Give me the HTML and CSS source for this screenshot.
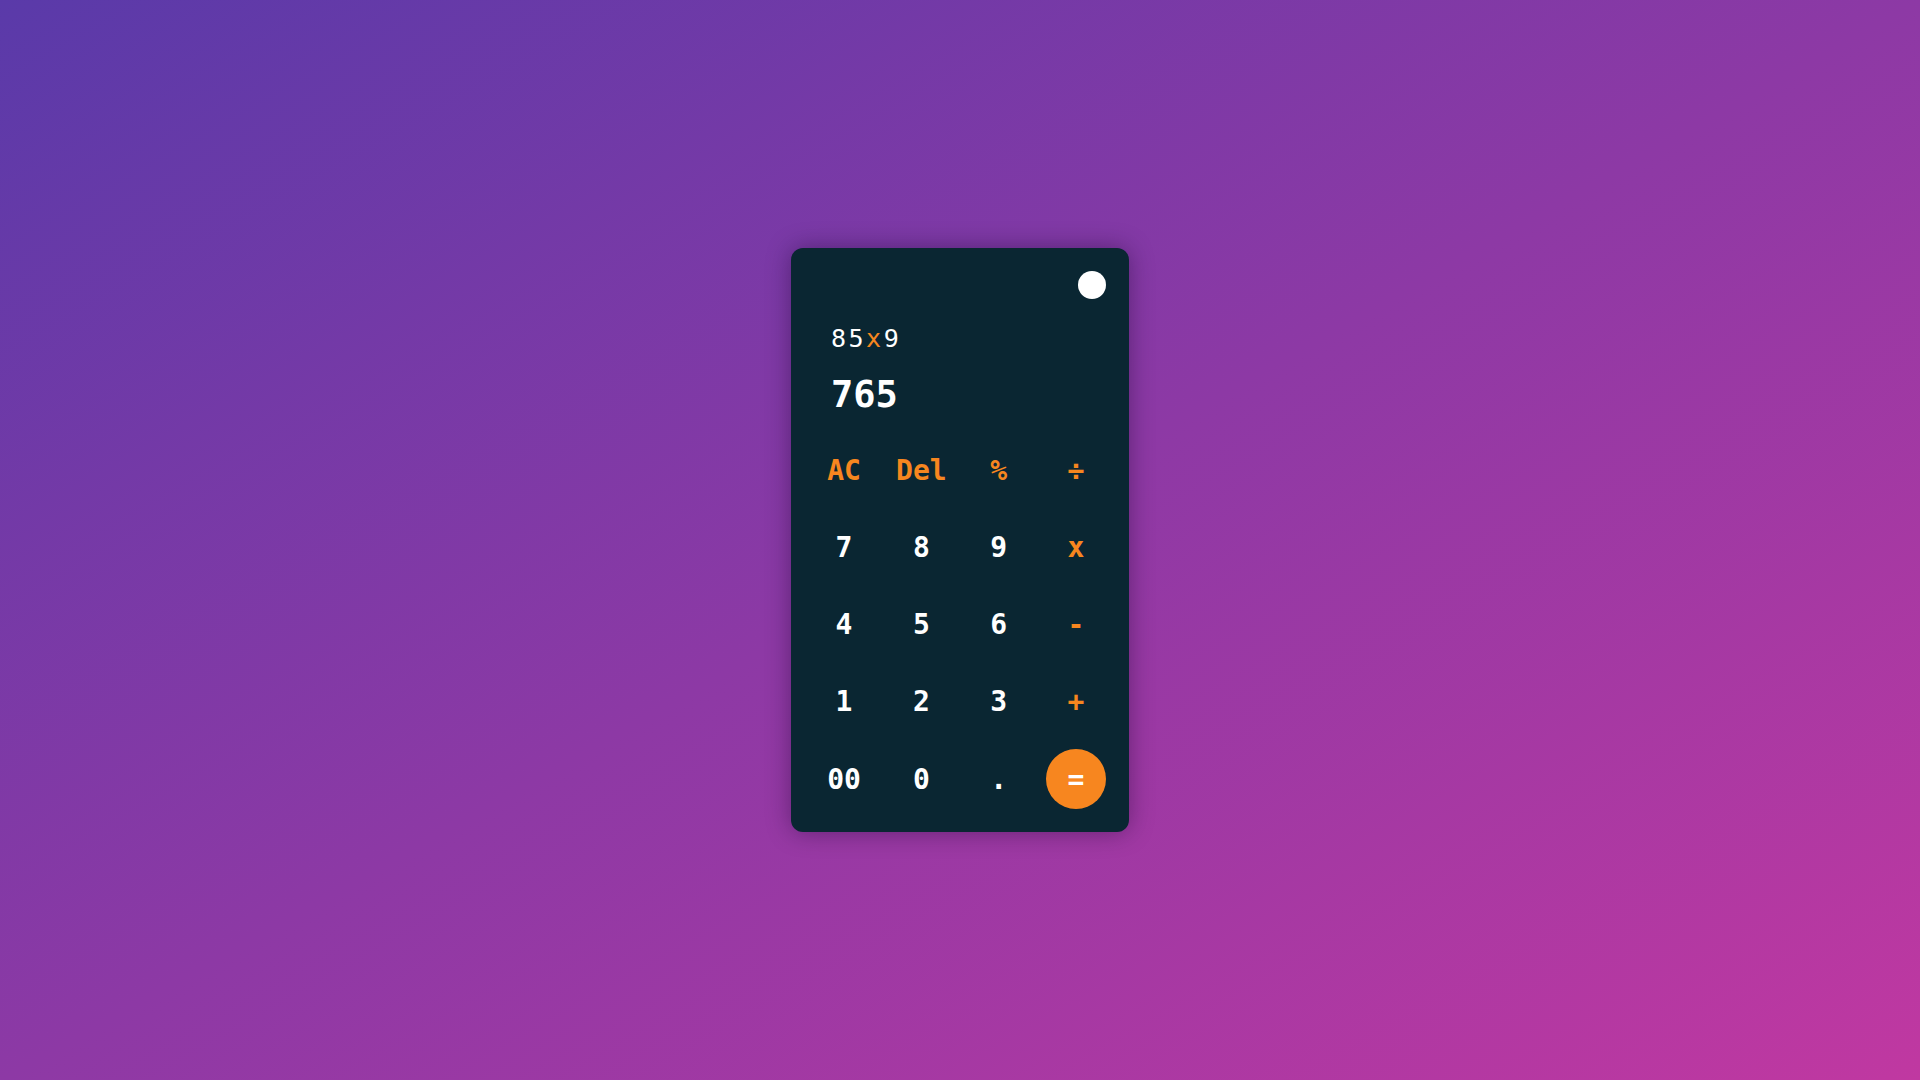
FILE: index.html
```html
<!DOCTYPE html>
<html lang="en">
<head>
<meta charset="utf-8">
<title>Calculator</title>
<link rel="stylesheet" href="styles.css">
</head>
<body>
<div class="calc">
  <div class="topbar"><span class="toggle"></span></div>
  <div class="display">
    <div class="expr">85<span class="op">x</span>9</div>
    <div class="result">765</div>
  </div>
  <div class="keys">
    <button class="key fn">AC</button>
    <button class="key fn">Del</button>
    <button class="key fn">%</button>
    <button class="key fn">÷</button>
    <button class="key">7</button>
    <button class="key">8</button>
    <button class="key">9</button>
    <button class="key fn">x</button>
    <button class="key">4</button>
    <button class="key">5</button>
    <button class="key">6</button>
    <button class="key fn">-</button>
    <button class="key">1</button>
    <button class="key">2</button>
    <button class="key">3</button>
    <button class="key fn">+</button>
    <button class="key">00</button>
    <button class="key">0</button>
    <button class="key">.</button>
    <button class="key eq">=</button>
  </div>
</div>
</body>
</html>
```
FILE: styles.css
```css
html, body {
  margin: 0;
  height: 100%;
}
body {
  background: linear-gradient(to bottom right, #5a3aa9, #c038a1);
  display: flex;
  align-items: center;
  justify-content: center;
  font-family: "DejaVu Sans Mono", monospace;
}
.calc {
  box-sizing: border-box;
  width: 338px;
  height: 584px;
  padding: 23px;
  background: #0a2632;
  border-radius: 12px;
  box-shadow: 0 0 24px rgba(20, 0, 40, 0.4);
  display: flex;
  flex-direction: column;
}
.topbar {
  display: flex;
  justify-content: flex-end;
  height: 28px;
}
.toggle {
  width: 28px;
  height: 28px;
  border-radius: 50%;
  background: #ffffff;
}
.display {
  padding-left: 17px;
  padding-top: 25px;
  color: #ffffff;
}
.expr {
  font-size: 25px;
  line-height: 30px;
  letter-spacing: 2.5px;
}
.op {
  color: #f7861f;
}
.result {
  margin-top: 19px;
  font-size: 37px;
  line-height: 44px;
  font-weight: bold;
}
.keys {
  margin-top: 23px;
  display: grid;
  grid-template-columns: repeat(4, 60px);
  grid-auto-rows: 60px;
  justify-content: space-between;
  row-gap: 17.25px;
}
.key {
  width: 60px;
  height: 60px;
  border: none;
  border-radius: 50%;
  background: transparent;
  color: #ffffff;
  font-family: "DejaVu Sans Mono", monospace;
  font-weight: bold;
  font-size: 28px;
  padding: 0;
  display: flex;
  align-items: center;
  justify-content: center;
}
.key.fn {
  color: #f7861f;
}
.key.eq {
  background: #f7861f;
  color: #ffffff;
}
```
